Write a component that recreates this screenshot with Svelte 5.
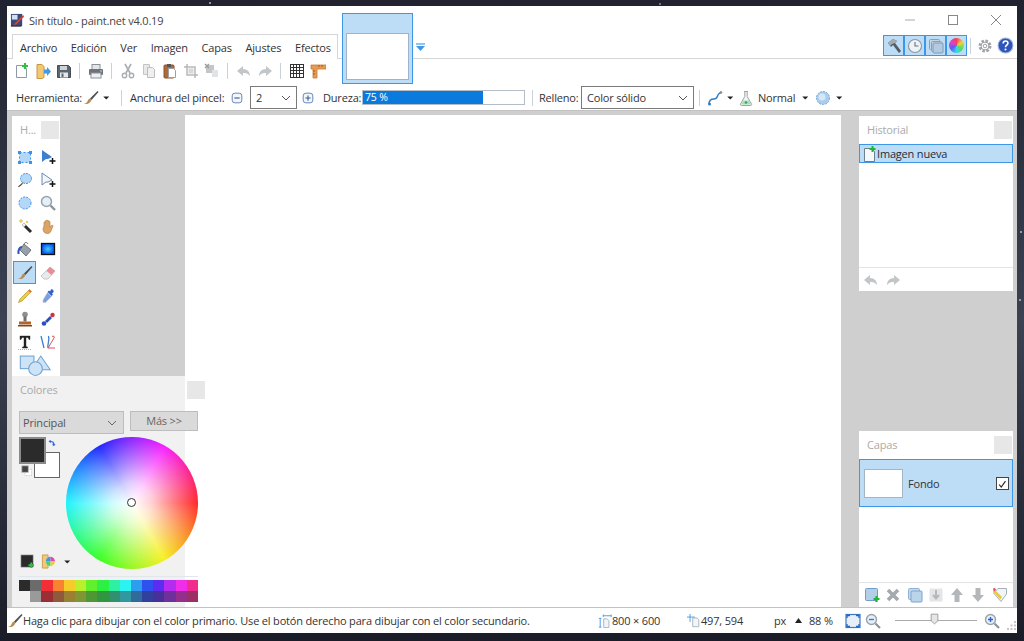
<script>
  const menu = ['Archivo', 'Edición', 'Ver', 'Imagen', 'Capas', 'Ajustes', 'Efectos'];

  const icons = {
    app: '<rect x="1" y="1" width="12" height="13" fill="#3a4a78"/><rect x="2" y="2" width="6" height="5" fill="#cfe0f5"/><path d="M14 2 6 10l-2 3 3-1 8-8z" fill="#d8403a"/><path d="M1 14h11" stroke="#222"/>',
    new: '<path d="M2.5 2.5h7l3 3v9h-10z" fill="#fff" stroke="#8d9aa6"/><path d="M11 0v6M8 3h6" stroke="#2fbf45" stroke-width="2.2"/>',
    open: '<path d="M2 1.5h5l2 2v11l-2 1H2z" fill="#f3c873" stroke="#c9963f"/><path d="M9 5h3V2.5l4 4.5-4 4.5V9H9z" transform="translate(0 1.5)" fill="#3f9be6"/>',
    save: '<path d="M1.5 2.5h11l2 2v10h-13z" fill="#5b6670" stroke="#454d55"/><rect x="4" y="3" width="7" height="4" fill="#cdd3d8"/><rect x="4" y="9.5" width="8" height="5" fill="#e6e8ea"/><rect x="5.5" y="10.5" width="2" height="3.5" fill="#5b6670"/>',
    print: '<rect x="4" y="1.5" width="8" height="5" fill="#e4e6e8" stroke="#8c9298"/><rect x="1" y="6" width="14" height="6" rx="1" fill="#6c737a"/><rect x="3" y="10" width="10" height="5" fill="#eef0f2" stroke="#8c9298"/><path d="M12 8h2" stroke="#ccc"/>',
    cut: '<path d="M5 1l5 9M11 1 6 10" stroke="#a9adb1" stroke-width="1.6" fill="none"/><circle cx="4.5" cy="12.5" r="2.2" fill="none" stroke="#a9adb1" stroke-width="1.4"/><circle cx="11.5" cy="12.5" r="2.2" fill="none" stroke="#a9adb1" stroke-width="1.4"/>',
    copy: '<path d="M2.5 1.5h6v10h-6z" fill="#e8e8e8" stroke="#c4c4c4"/><path d="M6.5 4.5h5l2 2v8h-7z" fill="#efefef" stroke="#bdbdbd"/>',
    paste: '<rect x="2" y="2" width="10" height="13" rx="1" fill="#b0693a" stroke="#8e5228"/><rect x="5" y="1" width="4" height="3" fill="#555"/><path d="M6.5 5.5h5l2 2v7h-7z" fill="#fff" stroke="#9aa0a6"/>',
    crop: '<path d="M4 1v11h11M1 4h11v11" fill="none" stroke="#b5b8bb" stroke-width="1.5"/><rect x="5.5" y="5.5" width="5" height="5" fill="#d6d8da"/>',
    deselect: '<rect x="2" y="2" width="8" height="8" fill="#c4c6c8"/><path d="M8 7h6v7H8z" fill="#e2e3e4"/><path d="M1 1l4 4M5 1 1 5" stroke="#9a9c9e" stroke-width="1.4"/>',
    undo: '<path d="M7 3 1 8l6 5v-3c3 0 5 .5 7 3 0-4-2.500-7-7-7z" fill="#c3c6c9"/>',
    redo: '<path d="M9 3l6 5-6 5v-3c-3 0-5 .5-7 3 0-4 2.500-7 7-7z" fill="#c3c6c9"/>',
    grid: '<rect x="1.500" y="1.500" width="13" height="13" fill="#fff" stroke="#333"/><path d="M4.500 1.500v13M7.500 1.500v13M10.500 1.500v13M1.500 4.500h13M1.500 7.500h13M1.500 10.500h13" stroke="#333"/>',
    rulers: '<path d="M1 2h15v4H7v9H3V6H1z" fill="#e89a50" stroke="#c27a35" stroke-width=".8"/><path d="M9 2v2M12 2v2M3 8h2M3 11h2" stroke="#9a5c20"/>',
    brush: '<path d="M14.500 1 7 8.500l1.500 1.500L15.500 2z" fill="#4a4f55"/><path d="M7 8.500c-2 .5-2 2-3 3.500-.5 1-1.500 1.500-3 2 3 .5 6-.5 7.500-4z" fill="#b98a55"/>',
    dropdown: '<path d="M3 6h8L7 10z" fill="#222"/>',
    minus: '<rect x="2.500" y="2.500" width="11" height="11" rx="3" fill="#f3f6fb" stroke="#5577aa"/><path d="M5 8h6" stroke="#3b5f96" stroke-width="1.300"/>',
    plus: '<rect x="2.500" y="2.500" width="11" height="11" rx="3" fill="#f3f6fb" stroke="#5577aa"/><path d="M5 8h6M8 5v6" stroke="#3b5f96" stroke-width="1.300"/>',
    curve: '<path d="M2 14c0-4 2-5 5-5s3-2 4-4 2-2 3-3" fill="none" stroke="#2f7fc8" stroke-width="1.500"/><circle cx="2.500" cy="14" r="1.500" fill="#2f7fc8"/><circle cx="14" cy="2.500" r="1.300" fill="#888"/>',
    flask: '<path d="M6 1.500h4M6.800 1.500v5L2.500 14c-.4.8 0 1.500 1 1.500h9c1 0 1.400-.7 1-1.500L9.200 6.500v-5" fill="#f2f6f8" stroke="#9aa4aa"/><path d="M5 10.500h6l2 4H3z" fill="#a8e0b8"/><circle cx="8" cy="12.500" r="1.300" fill="#2fae55"/>',
    sphere: '<circle cx="8" cy="8" r="6.500" fill="#a9cdee" stroke="#7aa5cf" stroke-dasharray="2 1"/><circle cx="7" cy="7" r="3.500" fill="#d5e7f7"/>',
    hammer: '<path d="M2 5 7 1l4 2-2 2 6 8-2 2-6-8-2 2z" fill="#555c62"/><path d="M2 5 7 1l4 2-2 2-3 1-2 2z" fill="#a4acb2"/>',
    clock: '<circle cx="8" cy="8" r="6.500" fill="#edf3f9" stroke="#8a96a2" stroke-width="1.100"/><path d="M8 4v4h3.500" fill="none" stroke="#6a7379" stroke-width="1.100"/>',
    layers: '<rect x="1.500" y="1.500" width="10" height="10" rx="1" fill="#c3d6e8" stroke="#8ba0b5"/><rect x="3.500" y="3.500" width="10" height="10" rx="1" fill="#c3d6e8" stroke="#8ba0b5"/><rect x="5" y="5" width="10" height="10" rx="1" fill="#b2cbe3" stroke="#7f9ab5"/>',
    gear: '<circle cx="8" cy="8" r="5" fill="none" stroke="#a0a4a8" stroke-width="3" stroke-dasharray="2.400 1.500"/><circle cx="8" cy="8" r="4" fill="none" stroke="#a0a4a8"/><circle cx="8" cy="8" r="1.800" fill="#fff" stroke="#a0a4a8"/>',
    rect: '<rect x="2.500" y="3.500" width="11" height="10" fill="#b3d7f7"/><path d="M2.500 3.500h11v10h-11z" fill="none" stroke="#3e93e6" stroke-dasharray="2 2"/><path d="M1 2h3v3H1zM12 2h3v3h-3zM1 12h3v3H1zM12 12h3v3h-3z" fill="#3e93e6"/>',
    movesel: '<path d="M2 1v12l4-3 2 0 4-2z" fill="#3d7fd0"/><path d="M12.500 9v6M9.500 12h6" stroke="#111" stroke-width="1.500"/>',
    lasso: '<ellipse cx="9" cy="6.500" rx="5.500" ry="5" fill="#b3d7f7" stroke="#3e93e6" stroke-dasharray="2 1"/><path d="M5.500 10.500C5 13 3 13 1.500 15" fill="none" stroke="#444" stroke-width="1.200"/>',
    moveselw: '<path d="M2 1v12l4-3 2 0 4-2z" fill="#f2f5f9" stroke="#6d88ad"/><path d="M12.500 9v6M9.500 12h6" stroke="#111" stroke-width="1.500"/>',
    ellipse: '<circle cx="8" cy="8" r="6" fill="#b3d7f7" stroke="#3e93e6" stroke-dasharray="2 1.200"/>',
    zoom: '<circle cx="6.500" cy="6.500" r="5" fill="#e3eff9" stroke="#9aa3aa" stroke-width="1.500"/><path d="M10.500 10.500 15 15" stroke="#8c949a" stroke-width="2.400"/>',
    wand: '<path d="M6 6l8 8" stroke="#2b2b2b" stroke-width="3"/><path d="M6 6l2 2" stroke="#eee" stroke-width="3"/><path d="M4 1v4M2 3h4M10 3v2M9 4h2" stroke="#e8b530"/>',
    hand: '<path d="M4 8V4.500c0-1 1.500-1 1.500 0V3c0-1 1.500-1 1.500 0v0c0-1 1.500-1 1.500 0v1c0-1 1.500-1 1.500 0v5l1.500-1.500c1-.8 2 .2 1.300 1L10.500 14c-.5.800-1.500 1.500-3 1.500-3 0-4.500-2-4.500-4.500z" fill="#dba567" stroke="#b98348" stroke-width=".7"/>',
    bucket: '<path d="M7 3l7 6-5 6-6-6z" fill="#9aa0a8" stroke="#70767c"/><path d="M5 6c-2 0-4 2-3.500 7" fill="none" stroke="#2f55c0" stroke-width="2"/><path d="M7 3C8 1 10 1 11 3" fill="none" stroke="#666"/>',
    gradient: '<defs><radialGradient id="gr"><stop stop-color="#38d0ff"/><stop offset="1" stop-color="#0a50e8"/></radialGradient></defs><rect x="1.500" y="2.500" width="13" height="11" fill="url(#gr)" stroke="#111" stroke-width="1.300"/>',
    eraser: '<path d="M10 2l5 4-7 8H4L1 11z" fill="#e9eaec" stroke="#c5c7ca"/><path d="M10 2l5 4-3.500 4-5-4z" fill="#f08a94"/>',
    pencil: '<path d="M12.500 1.500l2 2L5 13l-3.500 1.500L3 11z" fill="#f0cc40" stroke="#a88a20" stroke-width=".6"/><path d="M12.500 1.500l2 2-1.300 1.300-2-2z" fill="#e8685a"/>',
    dropper: '<path d="M11 1.500c1-1 3.500 1 2.500 2.500L12 5.500l1 1-1.500 1.500-4-4L9 2.500l1 1z" fill="#2f60c8"/><path d="M7.500 4.500l4 4-6 6H3v-2.500z" fill="#7d9fe0" stroke="#c4c8cc" stroke-width=".6"/>',
    stamp: '<circle cx="8" cy="3.500" r="2.800" fill="#8f8f8f"/><path d="M6.500 5.500h3v5h-3z" fill="#6f6f6f"/><path d="M2 10.500h12v3H2z" fill="#b4622a"/><path d="M1 14h14v1.500H1z" fill="#7f4520"/>',
    recolor: '<path d="M5 10l5-5 2 2-5 5z" fill="#2a50c0"/><circle cx="12.500" cy="4" r="2.200" fill="#d8303a"/><circle cx="4" cy="12.500" r="2.300" fill="#2a50c0"/>',
    text: '<path d="M3 2h10v3.500h-1L11 3.500H9v9l1.500.5v1h-5v-1L7 12.500v-9H5L4 5.500H3z" fill="#222" stroke="#222" stroke-width=".4"/><path d="M1 15.500h14" stroke="#7fb4e6" stroke-dasharray="1 1"/>',
    line: '<path d="M1 2l3 12M8 14c-1-4 2-7 .5-12" fill="none" stroke="#3e7fd0" stroke-width="1.300"/><path d="M8 14l6-10c1-1.500-.5-2.500-2-1.500M8 14h7" fill="none" stroke="#d8505a" stroke-width="1"/>',
    shapes: '<rect x="1" y="1" width="13" height="12" fill="#cfe3f6" stroke="#6fa3d2"/><path d="M20.500 1l9 13h-18z" fill="#cfe3f6" stroke="#6fa3d2"/><circle cx="15.500" cy="13" r="6.500" fill="#cfe3f6" stroke="#6fa3d2"/>',
    swap: '<path d="M2 3l3-2v1.500c3 0 5 1 5 4.500H11.500L9 9.500 6.500 7H8C8 5 7 4 5 4v1.500z" fill="#3b64d8"/>',
    reset: '<rect x="5" y="5" width="8" height="8" fill="#fff" stroke="#bbb" stroke-dasharray="1 1"/><rect x="1" y="1" width="8" height="8" fill="#444" stroke="#bbb"/>',
    addcolor: '<rect x="1" y="1" width="13" height="13" fill="#2b2b2b" stroke="#aaa" stroke-width=".6"/><path d="M12 9v6M9 12h6" stroke="#2fbf45" stroke-width="2"/>',
    palette: '<path d="M1.500 1h6v14h-6z" fill="#f3c873" stroke="#c9a050"/><circle cx="10" cy="8" r="5" fill="#fff"/><path d="M10 3a5 5 0 0 1 5 5h-5z" fill="#e04ab0"/><path d="M15 8a5 5 0 0 1-5 5V8z" fill="#e8d040"/><path d="M10 13a5 5 0 0 1-5-5h5z" fill="#50d060"/><path d="M5 8a5 5 0 0 1 5-5v5z" fill="#4a90e0"/>',
    docadd: '<path d="M3.500 2.500h7l3 3v10h-10z" fill="#f6f9fc" stroke="#6f7f8d"/><path d="M11.500 0v6M8.500 3h6" stroke="#22b33a" stroke-width="2"/>',
    layeradd: '<rect x="1.500" y="1.500" width="12" height="12" rx="1" fill="#b3cfe8" stroke="#6f9cc8"/><path d="M12.500 9v6M9.500 12h6" stroke="#22b33a" stroke-width="2.200"/>',
    layerdel: '<path d="M3 3l10 10M13 3 3 13" stroke="#a5a9ad" stroke-width="3.600"/>',
    layerdup: '<rect x="1.500" y="1.500" width="11" height="11" rx="1" fill="#c7daec" stroke="#8fb1d3"/><rect x="4" y="4" width="11" height="11" rx="1" fill="#bcd4ea" stroke="#7ba4cc"/>',
    layermerge: '<rect x="1.500" y="1.500" width="13" height="13" fill="#e4e5e6"/><path d="M8 3v8M5 8l3 3.500L11 8" fill="none" stroke="#b5b7b9" stroke-width="2"/>',
    up: '<path d="M8 1l6 7h-3.500v7h-5V8H2z" fill="#b4b7ba"/>',
    down: '<path d="M8 15l6-7h-3.500V1h-5v7H2z" fill="#b4b7ba"/>',
    props: '<path d="M1.500 6 6 1.500h8.500V7L9 14.500z" fill="#f2f5f7" stroke="#a5b0b8"/><path d="M2 2l8 8-1.500 2.500L1 4.500z" fill="#e8c940"/><path d="M1 1.500 3 1l1 2-2 1.500z" fill="#d8505a"/>',
    dims: '<path d="M6.500 5.500h4l2 2v8h-6z" fill="#f2f5f7" stroke="#a5b0b8"/><path d="M6 2h9M6 .5v3M15 .5v3M2.500 5v10M1 5h3M1 15h3" stroke="#3e93e6"/>',
    pos: '<path d="M6.500 4.500h5l2 2v8h-7z" fill="#f2f5f7" stroke="#a5b0b8"/><path d="M3.500 0v9M0 3.500h9" stroke="#3e93e6"/>',
    fit: '<rect x="1" y="1.500" width="14" height="13" fill="#e6eef7" stroke="#3b78c8" stroke-width="1.200"/><path d="M2 5V2.500h3M11 2.500h3V5M14 11v2.500h-3M5 13.500H2V11" fill="none" stroke="#2563c0" stroke-width="1.300"/>',
    zoomout: '<circle cx="6.500" cy="6.500" r="5" fill="#e3eff9" stroke="#9aa3aa" stroke-width="1.400"/><path d="M10.500 10.500 15 15" stroke="#8c949a" stroke-width="2.200"/><path d="M4 6.500h5" stroke="#4a78c0" stroke-width="1.400"/>',
    zoomin: '<circle cx="6.500" cy="6.500" r="5" fill="#e3eff9" stroke="#9aa3aa" stroke-width="1.400"/><path d="M10.500 10.500 15 15" stroke="#8c949a" stroke-width="2.200"/><path d="M4 6.500h5M6.500 4v5" stroke="#2f60c8" stroke-width="1.400"/>',
    thumb: '<path d="M1.500 1.500h9v9L6 14.500 1.500 10.500z" fill="#e6e6e6" stroke="#8a8a8a"/>',
    help: '<circle cx="8" cy="8" r="7" fill="#2f55b8" stroke="#9db3dd"/><path d="M5.800 6c0-3 4.500-3 4.500-.3 0 2-2.300 2-2.300 4" fill="none" stroke="#fff" stroke-width="1.500"/><circle cx="8" cy="11.800" r="1" fill="#fff"/>',
    check: '<path d="M2.500 6.500 5 9.500l5-7" fill="none" stroke="#222" stroke-width="1.300"/>'
  };

  const mainTools = [
    ['new'], ['open'], ['save'], null, ['print'], null, ['cut'], ['copy'], ['paste'], ['crop'], ['deselect'], null,
    ['undo'], ['redo'], null, ['grid'], ['rulers']
  ];

  const tools = [
    'rect', 'movesel', 'lasso', 'moveselw', 'ellipse', 'zoom', 'wand', 'hand', 'bucket', 'gradient',
    'brush', 'eraser', 'pencil', 'dropper', 'stamp', 'recolor', 'text', 'line'
  ];

  const paletteTop = ['#2b2b2b', '#6b6b6b', '#f22f36', '#f7822f', '#f6cb2c', '#b9f02d', '#62f02d', '#2df045', '#2df0a2', '#2df2f2', '#2d9df0', '#2d52f0', '#5c2df0', '#b22df0', '#f02de8', '#f02d8f'];
  const paletteBottom = ['transparent', '#9a9a9a', '#9b2d35', '#90593a', '#9a8034', '#7f9634', '#4f9634', '#309640', '#30906f', '#30989e', '#306b9c', '#30409c', '#47309c', '#70309c', '#94308c', '#9c3062'];
</script>

{#snippet ico(name, size = 16)}
  <svg class="ico" width={size} height={size} viewBox="0 0 16 16">{@html icons[name]}</svg>
{/snippet}

<div class="desktop">
  <div class="window">
    <header class="titlebar">
      {@render ico('app', 15)}
      <span class="title">Sin título - paint.net v4.0.19</span>
      <div class="controls">
        <svg width="12" height="12" viewBox="0 0 12 12"><path d="M1 6h10" stroke="#aaa" /></svg>
        <svg width="12" height="12" viewBox="0 0 12 12"><rect x="1.500" y="1.500" width="9" height="9" fill="none" stroke="#888" /></svg>
        <svg width="12" height="12" viewBox="0 0 12 12"><path d="M1 1l10 10M11 1 1 11" stroke="#888" /></svg>
      </div>
    </header>

    <nav class="menubar">
      <div class="menu">
        {#each menu as item}
          <span>{item}</span>
        {/each}
      </div>
      <div class="thumb-tab">
        <div class="thumb-inner"></div>
      </div>
      <svg class="tab-arrow" width="11" height="10" viewBox="0 0 11 10"><path d="M1 1h9v2H1z" fill="#8fc3f0" /><path d="M1 4h9L5.500 9z" fill="#3f97e6" /></svg>
      <div class="panes">
        <button class="pane">{@render ico('hammer')}</button>
        <button class="pane">{@render ico('clock')}</button>
        <button class="pane">{@render ico('layers')}</button>
        <button class="pane"><span class="hue"></span></button>
        <i class="vsep"></i>
        <span class="util">{@render ico('gear')}</span>
        <span class="util">{@render ico('help', 17)}</span>
      </div>
    </nav>

    <div class="toolbar">
      {#each mainTools as tool}
        {#if tool}
          <span class="tb">{@render ico(tool[0])}</span>
        {:else}
          <span class="tb-sep"><i class="vsep"></i></span>
        {/if}
      {/each}
    </div>

    <div class="options">
      <span class="lbl w-herr">Herramienta:</span>
      <span class="o-brush">{@render ico('brush')}</span>
      <span class="o-arrow">{@render ico('dropdown', 12)}</span>
      <i class="vsep s1"></i>
      <span class="lbl w-anchura">Anchura del pincel:</span>
      <span class="o-minus">{@render ico('minus', 14)}</span>
      <div class="combo c-size">
        <span>2</span>
        <svg width="10" height="6" viewBox="0 0 10 6"><path d="M1 1l4 4 4-4" fill="none" stroke="#555" /></svg>
      </div>
      <span class="o-plus">{@render ico('plus', 14)}</span>
      <span class="lbl w-dureza">Dureza:</span>
      <div class="bar"><div class="bar-fill" style="width: 74.500%">75 %</div></div>
      <i class="vsep s2"></i>
      <span class="lbl w-relleno">Relleno:</span>
      <div class="combo c-fill">
        <span>Color sólido</span>
        <svg width="10" height="6" viewBox="0 0 10 6"><path d="M1 1l4 4 4-4" fill="none" stroke="#555" /></svg>
      </div>
      <i class="vsep s3"></i>
      <span class="o-curve">{@render ico('curve')}</span>
      <span class="o-arrow a2">{@render ico('dropdown', 12)}</span>
      <span class="o-flask">{@render ico('flask')}</span>
      <span class="lbl w-normal">Normal</span>
      <span class="o-arrow a3">{@render ico('dropdown', 12)}</span>
      <span class="o-sphere">{@render ico('sphere')}</span>
      <span class="o-arrow a4">{@render ico('dropdown', 12)}</span>
    </div>

    <main class="workspace">
      <div class="canvas"></div>

      <section class="float f-tools">
        <div class="f-head">
          <span>H...</span>
          <b class="f-close"></b>
        </div>
        <div class="tool-grid">
          {#each tools as t}
            <span class="tool" class:active={t === 'brush'}>{@render ico(t)}</span>
          {/each}
          <span class="tool-shapes"><svg width="32" height="21" viewBox="0 0 30 20">{@html icons.shapes}</svg></span>
        </div>
      </section>

      <section class="float f-history">
        <div class="f-head">
          <span>Historial</span>
          <b class="f-close"></b>
        </div>
        <div class="hist-row">
          {@render ico('docadd')}
          <span>Imagen nueva</span>
        </div>
        <div class="f-spacer"></div>
        <div class="f-foot hist-foot">
          {@render ico('undo')}
          {@render ico('redo')}
        </div>
      </section>

      <section class="float f-layers">
        <div class="f-head">
          <span>Capas</span>
          <b class="f-close"></b>
        </div>
        <div class="layer-row">
          <div class="layer-thumb"></div>
          <span class="layer-name">Fondo</span>
          <span class="layer-check"><svg width="13" height="13" viewBox="0 0 13 13">{@html icons.check}</svg></span>
        </div>
        <div class="f-spacer"></div>
        <div class="f-foot layer-foot">
          {#each ['layeradd', 'layerdel', 'layerdup', 'layermerge', 'up', 'down', 'props'] as l}
            {@render ico(l)}
          {/each}
        </div>
      </section>

      <section class="float f-colors">
        <div class="f-head">
          <span>Colores</span>
          <b class="f-close"></b>
        </div>
        <div class="col-top">
          <div class="col-select">
            <span>Principal</span>
            <svg width="10" height="6" viewBox="0 0 10 6"><path d="M1 1l4 4 4-4" fill="none" stroke="#666" /></svg>
          </div>
          <div class="col-more">Más &gt;&gt;</div>
        </div>
        <div class="col-mid">
          <div class="swatches">
            <div class="sw-secondary"></div>
            <div class="sw-primary"></div>
            <span class="sw-swap">{@render ico('swap', 12)}</span>
            <span class="sw-reset">{@render ico('reset', 13)}</span>
          </div>
          <div class="wheel"><i class="wheel-dot"></i></div>
        </div>
        <div class="col-actions">
          {@render ico('addcolor', 15)}
          {@render ico('palette', 15)}
          {@render ico('dropdown', 12)}
        </div>
        <div class="col-palette">
          {#each paletteTop as c}
            <i style="background: {c}"></i>
          {/each}
          {#each paletteBottom as c}
            <i style="background: {c}"></i>
          {/each}
        </div>
      </section>
    </main>

    <footer class="statusbar">
      <span class="st-brush">{@render ico('brush')}</span>
      <span class="st-hint">Haga clic para dibujar con el color primario. Use el botón derecho para dibujar con el color secundario.</span>
      <span class="st-ic1">{@render ico('dims', 14)}</span>
      <span class="st-size">800 × 600</span>
      <span class="st-ic2">{@render ico('pos', 14)}</span>
      <span class="st-pos">497, 594</span>
      <span class="st-px">px</span>
      <svg class="st-up" width="7" height="5" viewBox="0 0 7 5"><path d="M3.500 0 7 5H0z" fill="#222" /></svg>
      <span class="st-zoom">88 %</span>
      <span class="st-fit">{@render ico('fit')}</span>
      <span class="st-out">{@render ico('zoomout')}</span>
      <div class="slider"><span class="slider-thumb">{@render ico('thumb', 12)}</span></div>
      <span class="st-in">{@render ico('zoomin')}</span>
      <svg class="grip" width="11" height="11" viewBox="0 0 11 11"><path d="M8 1h2v2H8zM4.500 4.500h2v2h-2zM8 4.500h2v2H8zM1 8h2v2H1zM4.500 8h2v2h-2zM8 8h2v2H8z" fill="#c4c4c4" /></svg>
    </footer>
  </div>
</div>

<style>
  :global(body) {
    margin: 0;
    overflow: hidden;
    background: #1b1e2b;
  }

  .desktop {
    height: 641px;
    box-sizing: border-box;
    padding: 6px 7px 8px 7px;
    background:
      radial-gradient(circle at 210px 3px, #8d93a5 0 1px, transparent 1.500px),
      radial-gradient(circle at 660px 4px, #6d7285 0 1px, transparent 1.500px),
      radial-gradient(circle at 1020px 300px, #9499aa 0 1px, transparent 1.500px),
      radial-gradient(circle at 1021px 232px, #9499aa 0 1px, transparent 1.500px),
      linear-gradient(180deg, #20232f 0, #3c4252 50%, #1a1d28 100%);
  }

  .window {
    height: 100%;
    display: flex;
    flex-direction: column;
    background: #fff;
    font-family: "Open Sans", "Noto Sans", sans-serif;
    font-size: 11px;
    letter-spacing: -0.18px;
    color: #333;
  }

  .ico {
    display: block;
    flex: none;
  }

  .vsep {
    display: block;
    width: 1px;
    height: 16px;
    background: #c8d2dc;
    flex: none;
  }

  .titlebar {
    height: 28px;
    flex: none;
    display: flex;
    align-items: center;
    padding-left: 3px;
  }

  .title {
    margin-left: 4px;
    font-size: 11px;
    color: #444;
  }

  .controls {
    margin-left: auto;
    display: flex;
    gap: 31px;
    margin-right: 15px;
    margin-top: -1px;
  }

  .menubar {
    height: 24px;
    flex: none;
    display: flex;
    position: relative;
    border-bottom: 1px solid #d6d6d6;
    box-sizing: content-box;
  }

  .menu {
    margin-left: 5px;
    width: 326px;
    box-sizing: border-box;
    height: 25px;
    background: #fff;
    border: 1px solid #d6d6d6;
    border-bottom: none;
    display: flex;
    align-items: center;
    padding-left: 7px;
    gap: 13.700px;
    color: #333;
    font-size: 11px;
  }

  .thumb-tab {
    position: absolute;
    left: 335px;
    top: -21px;
    width: 71px;
    height: 71px;
    box-sizing: border-box;
    border: 1px solid #3c97e8;
    background: #bddcf5;
    padding: 19px 3px 3px 3px;
    z-index: 3;
  }

  .thumb-inner {
    height: 100%;
    background: #fff;
    border: 1px solid #9fb4c8;
    box-sizing: border-box;
  }

  .tab-arrow {
    position: absolute;
    left: 408px;
    top: 8px;
  }

  .panes {
    margin-left: auto;
    margin-right: 1px;
    margin-top: 1px;
    display: flex;
    align-items: center;
    height: 21px;
  }

  .pane {
    width: 21px;
    height: 21px;
    padding: 0;
    background: #bddcf5;
    border: 1px solid #3c97e8;
    display: flex;
    align-items: center;
    justify-content: center;
  }

  .hue {
    width: 15px;
    height: 15px;
    border-radius: 50%;
    background: conic-gradient(#f04060, #f0d040, #50e060, #40d0f0, #5060f0, #e040d0, #f04060);
  }

  .panes .vsep {
    margin: 0 3px 0 3px;
  }

  .util {
    width: 21px;
    display: flex;
    justify-content: center;
  }

  .toolbar {
    height: 26px;
    flex: none;
    display: flex;
    align-items: center;
    padding-left: 4px;
    padding-bottom: 2px;
    box-sizing: border-box;
  }

  .tb {
    width: 21px;
    display: flex;
    justify-content: center;
  }

  .tb-sep {
    width: 11px;
    display: flex;
    justify-content: center;
  }

  .options {
    height: 25px;
    flex: none;
    display: flex;
    align-items: center;
    padding-left: 9px;
    box-sizing: border-box;
    color: #333;
  }

  .options > * {
    flex: none;
  }

  .lbl {
    white-space: nowrap;
  }

  .w-herr {
    width: 63px;
  }

  .o-brush {
    margin-left: 4px;
  }

  .o-arrow {
    margin-left: 2px;
  }

  .s1 {
    margin-left: 8px;
  }

  .w-anchura {
    margin-left: 8px;
    width: 100px;
  }

  .combo {
    box-sizing: border-box;
    height: 23px;
    display: flex;
    align-items: center;
    justify-content: space-between;
    padding: 0 5px;
    border: 1px solid #7a7a7a;
    background: #fff;
  }

  .c-size {
    width: 47px;
    margin-left: 6px;
  }

  .o-plus {
    margin-left: 4px;
  }

  .w-dureza {
    margin-left: 8px;
    width: 39px;
  }

  .bar {
    width: 163px;
    height: 15px;
    border: 1px solid #b5bec6;
    box-sizing: border-box;
    background: #fff;
  }

  .bar-fill {
    height: 100%;
    background: #0a7bdc;
    color: #fff;
    font-size: 10.500px;
    line-height: 13px;
    padding-left: 2px;
    box-sizing: border-box;
  }

  .s2 {
    margin-left: 7px;
  }

  .w-relleno {
    margin-left: 6px;
    width: 42px;
  }

  .c-fill {
    width: 113px;
  }

  .s3 {
    margin-left: 5px;
  }

  .o-curve {
    margin-left: 7px;
  }

  .a2 {
    margin-left: 2px;
  }

  .o-flask {
    margin-left: 1px;
  }

  .w-normal {
    margin-left: 4px;
    width: 40px;
  }

  .a3 {
    margin-left: 2px;
  }

  .o-sphere {
    margin-left: 3px;
  }

  .a4 {
    margin-left: 3px;
  }

  .workspace {
    flex: 1;
    min-height: 0;
    position: relative;
    background: #cfcfcf;
    padding: 4px 0 0 178px;
    border-top: 1px solid #c2c2c2;
    box-sizing: border-box;
    display: flex;
  }

  .canvas {
    width: 656px;
    background: #fff;
  }

  .float {
    position: absolute;
    background: #fff;
    box-sizing: border-box;
    display: flex;
    flex-direction: column;
  }

  .f-head {
    height: 27px;
    flex: none;
    display: flex;
    align-items: center;
    justify-content: space-between;
    padding: 0 1px 0 8px;
    color: #aaa;
    font-size: 11px;
  }

  .f-close {
    width: 18px;
    height: 18px;
    background: #e7e7e7;
  }

  .f-spacer {
    flex: 1;
  }

  .f-foot {
    flex: none;
    display: flex;
    align-items: center;
    border-top: 1px solid #e4e4e4;
  }

  .f-tools {
    left: 5px;
    top: 5px;
    width: 48px;
    height: 260px;
  }

  .tool-grid {
    display: grid;
    grid-template-columns: 23px 23px;
    grid-auto-rows: 23.200px;
    padding: 2px 0 0 1px;
  }

  .tool {
    display: flex;
    align-items: center;
    justify-content: center;
    box-sizing: border-box;
  }

  .tool.active {
    background: #bddcf5;
    border: 1px solid #3c97e8;
  }

  .tool-shapes {
    grid-column: span 2;
    display: flex;
    justify-content: center;
    align-items: center;
    padding-right: 2px;
  }

  .f-history {
    left: 852px;
    top: 5px;
    width: 154px;
    height: 175px;
  }

  .hist-row {
    margin-top: 1px;
    height: 19px;
    box-sizing: border-box;
    background: #bddcf5;
    border: 1px solid #3c97e8;
    display: flex;
    align-items: center;
    padding-left: 1px;
    color: #2a2a3a;
  }

  .hist-foot {
    height: 23px;
    padding-left: 4px;
    gap: 6px;
  }

  .f-layers {
    left: 852px;
    top: 320px;
    width: 154px;
    height: 176px;
  }

  .layer-row {
    height: 48px;
    margin-top: 1px;
    box-sizing: border-box;
    background: #bddcf5;
    border: 1px solid #3c97e8;
    display: flex;
    align-items: center;
    padding-left: 4px;
  }

  .layer-thumb {
    width: 39px;
    height: 29px;
    background: #fff;
    border: 1px solid #a5b5c2;
    box-sizing: border-box;
  }

  .layer-name {
    margin-left: 5px;
  }

  .layer-check {
    margin-left: auto;
    margin-right: 3px;
    width: 13px;
    height: 13px;
    box-sizing: border-box;
    border: 1px solid #444;
    background: #fff;
    display: flex;
  }

  .layer-foot {
    height: 24px;
    padding-left: 5px;
    gap: 5.300px;
  }

  .f-colors {
    left: 5px;
    top: 265px;
    width: 193px;
    height: 231px;
    background: rgba(255, 255, 255, 0.7);
    z-index: 2;
  }

  .f-colors .f-head {
    padding-right: 0;
  }

  .col-top {
    margin-top: 8px;
    display: flex;
    align-items: flex-start;
    gap: 6px;
    padding-left: 7px;
  }

  .col-select {
    width: 105px;
    height: 23px;
    box-sizing: border-box;
    background: #dadada;
    border: 1px solid #bdbdbd;
    display: flex;
    align-items: center;
    justify-content: space-between;
    padding: 0 6px 0 3px;
    color: #555;
  }

  .col-more {
    width: 68px;
    height: 20px;
    box-sizing: border-box;
    background: #dadada;
    border: 1px solid #bdbdbd;
    text-align: center;
    line-height: 18px;
    color: #666;
  }

  .col-mid {
    display: flex;
    padding-left: 7px;
    margin-top: 3px;
  }

  .swatches {
    position: relative;
    width: 47px;
    height: 60px;
    flex: none;
  }

  .sw-primary {
    position: absolute;
    left: 0;
    top: 0;
    width: 27px;
    height: 27px;
    box-sizing: border-box;
    background: #2b2b2b;
    border: 2px solid #8a8a8a;
  }

  .sw-secondary {
    position: absolute;
    left: 15px;
    top: 15px;
    width: 26px;
    height: 26px;
    box-sizing: border-box;
    background: #fff;
    border: 1px solid #666;
  }

  .sw-swap {
    position: absolute;
    left: 28px;
    top: 2px;
  }

  .sw-reset {
    position: absolute;
    left: 2px;
    top: 28px;
  }

  .wheel {
    width: 132px;
    height: 132px;
    border-radius: 50%;
    position: relative;
    background:
      radial-gradient(closest-side, #fff 0, rgba(255, 255, 255, 0.78) 30%, rgba(255, 255, 255, 0.38) 65%, rgba(255, 255, 255, 0) 100%),
      conic-gradient(from 90deg, #ff2828, #f6f020 60deg, #38ff20 120deg, #20f4ff 180deg, #2028ff 240deg, #f820ff 300deg, #ff2828);
  }

  .wheel-dot {
    position: absolute;
    left: 61px;
    top: 61px;
    width: 9px;
    height: 9px;
    box-sizing: border-box;
    border-radius: 50%;
    border: 1px solid #333;
    background: rgba(255, 255, 255, 0.5);
  }

  .col-actions {
    margin-top: -15px;
    padding-left: 8px;
    display: flex;
    align-items: center;
    gap: 6px;
  }

  .col-palette {
    margin: 7px 7px 0 7px;
    padding-top: 3px;
    border-top: 1px solid #dfe6ec;
    display: grid;
    grid-template-columns: repeat(16, 1fr);
    grid-auto-rows: 11px;
  }

  .col-palette i {
    display: block;
  }

  .statusbar {
    height: 26px;
    flex: none;
    display: flex;
    align-items: center;
    background: #fff;
    border-top: 1px solid #c2c2c2;
    box-sizing: border-box;
    color: #333;
    z-index: 3;
  }

  .statusbar > * {
    flex: none;
  }

  .st-hint {
    width: 575px;
    white-space: nowrap;
  }

  .st-size {
    width: 75px;
  }

  .st-pos {
    width: 73px;
  }

  .st-px {
    width: 21px;
  }

  .st-up {
    margin-right: 7px;
  }

  .st-zoom {
    width: 36px;
  }

  .st-out {
    margin-left: 4px;
  }

  .slider {
    width: 82px;
    height: 1px;
    margin-left: 14px;
    background: #aaa;
    position: relative;
  }

  .slider-thumb {
    position: absolute;
    left: 35px;
    top: -7px;
  }

  .st-in {
    margin-left: 7px;
  }

  .grip {
    margin-left: 6px;
    align-self: flex-end;
    margin-bottom: 2px;
  }
</style>
